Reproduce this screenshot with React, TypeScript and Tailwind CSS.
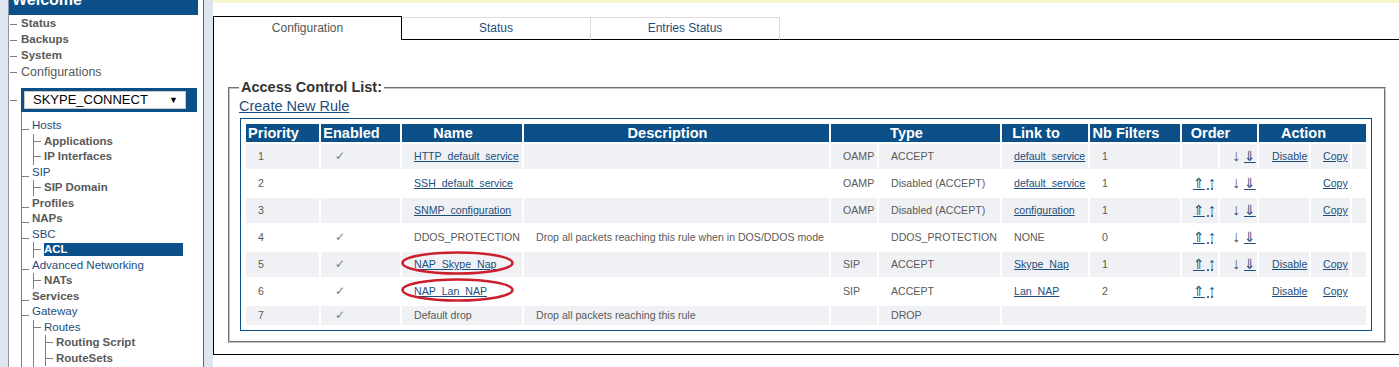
import React from 'react'

type Tone = 'bold' | 'link' | 'active'

const toneClass: Record<Tone, string> = {
  bold: 'font-bold text-[#595959]',
  link: 'text-[#1e4d7b]',
  active: 'inline-block w-[139px] h-[13px] leading-[13px] bg-[#0b5088] font-bold text-white',
}

function TreeItem({ label, tone, low }: { label: string; tone: Tone; low?: boolean }) {
  return (
    <div className="flex h-[15.5px] items-center whitespace-nowrap text-[11.5px]">
      <span className={`block h-px w-[7px] shrink-0 bg-[#808080] ${low ? 'translate-y-[4px]' : ''}`} />
      <span className={`ml-[3px] ${toneClass[tone]}`}>{label}</span>
    </div>
  )
}

function Group({ children }: { children: React.ReactNode }) {
  return <div className="ml-[11px] border-l border-[#808080]">{children}</div>
}

function Sidebar() {
  const top = ['Status', 'Backups', 'System']
  return (
    <div className="flex w-[196px] shrink-0 flex-col border-l border-r border-l-[#8a94a3] border-r-[#3f6a99] bg-white">
      <div className="-mt-[10px] h-[25px] w-[189px] shrink-0 bg-[#0b5088] pl-[3px] pt-[1px] text-[16px] font-bold leading-[18px] text-white">
        Welcome
      </div>
      <div className="mt-[1px]">
        {top.map((t) => (
          <div key={t} className="flex h-[16px] items-center text-[11.5px]">
            <span className="ml-[1px] block h-px w-[7px] bg-[#808080]" />
            <span className="ml-[4px] font-bold text-[#595959]">{t}</span>
          </div>
        ))}
        <div className="flex h-[16px] items-center text-[12.5px]">
          <span className="ml-[1px] block h-px w-[7px] bg-[#808080]" />
          <span className="ml-[4px] text-[#595959]">Configurations</span>
        </div>
      </div>

      <div className="mt-[8px] flex items-center">
        <span className="ml-[1px] block h-px w-[7px] bg-[#808080]" />
        <div className="ml-[4px] h-[24px] w-[176px] bg-[#0b5088] p-[3px]">
          <div className="flex h-[18px] w-[162px] items-center justify-between border border-[#c8c8c8] bg-white pl-[8px] pr-[7px] text-[13px] leading-[16px] text-black">
            <span>SKYPE_CONNECT</span>
            <span className="text-[9px]">▼</span>
          </div>
        </div>
      </div>

      <div className="ml-[12px] flex-1 border-l border-[#808080] pt-[6px]">
        <TreeItem label="Hosts" tone="link" low />
        <Group>
          <TreeItem label="Applications" tone="bold" />
          <TreeItem label="IP Interfaces" tone="bold" />
        </Group>
        <TreeItem label="SIP" tone="link" low />
        <Group>
          <TreeItem label="SIP Domain" tone="bold" />
        </Group>
        <TreeItem label="Profiles" tone="bold" low />
        <TreeItem label="NAPs" tone="bold" low />
        <TreeItem label="SBC" tone="link" low />
        <Group>
          <TreeItem label="ACL" tone="active" />
        </Group>
        <TreeItem label="Advanced Networking" tone="link" low />
        <Group>
          <TreeItem label="NATs" tone="bold" />
        </Group>
        <TreeItem label="Services" tone="bold" low />
        <TreeItem label="Gateway" tone="link" low />
        <Group>
          <TreeItem label="Routes" tone="link" />
          <Group>
            <TreeItem label="Routing Script" tone="bold" />
            <TreeItem label="RouteSets" tone="bold" />
          </Group>
          <div className="h-[20px]" />
        </Group>
      </div>
    </div>
  )
}

const A = ({ children }: { children: React.ReactNode }) => (
  <a href="#" className="text-[#1e4d7b] underline">
    {children}
  </a>
)

const UpArrows = () => (
  <span className="inline-flex items-center">
    <a href="#" className="font-['DejaVu_Sans'] text-[14px] leading-[14px] text-[#1e4d7b] underline">⇑</a>
    <a href="#" className="ml-[3px] text-[16px] leading-[14px] text-[#1e4d7b] underline decoration-dotted">↑</a>
  </span>
)

const DownArrows = () => (
  <span className="inline-flex items-center">
    <span className="text-[16px] leading-[14px] text-[#555]">↓</span>
    <a href="#" className="ml-[4px] font-['DejaVu_Sans'] text-[14px] leading-[14px] text-[#1e4d7b] underline">⇓</a>
  </span>
)

type Row = {
  prio: string
  on: boolean
  name: React.ReactNode
  circled?: boolean
  desc?: string
  proto: string
  type: string
  link?: React.ReactNode
  nb?: string
  up?: boolean
  down?: boolean
  disable?: boolean
  copy?: boolean
  last?: boolean
}

const rows: Row[] = [
  { prio: '1', on: true, name: <A>HTTP_default_service</A>, proto: 'OAMP', type: 'ACCEPT', link: <A>default_service</A>, nb: '1', down: true, disable: true, copy: true },
  { prio: '2', on: false, name: <A>SSH_default_service</A>, proto: 'OAMP', type: 'Disabled (ACCEPT)', link: <A>default_service</A>, nb: '1', up: true, down: true, copy: true },
  { prio: '3', on: false, name: <A>SNMP_configuration</A>, proto: 'OAMP', type: 'Disabled (ACCEPT)', link: <A>configuration</A>, nb: '1', up: true, down: true, copy: true },
  { prio: '4', on: true, name: 'DDOS_PROTECTION', desc: 'Drop all packets reaching this rule when in DOS/DDOS mode', proto: '', type: 'DDOS_PROTECTION', link: 'NONE', nb: '0', up: true, down: true },
  { prio: '5', on: true, name: <A>NAP_Skype_Nap</A>, circled: true, proto: 'SIP', type: 'ACCEPT', link: <A>Skype_Nap</A>, nb: '1', up: true, down: true, disable: true, copy: true },
  { prio: '6', on: true, name: <A>NAP_Lan_NAP</A>, circled: true, proto: 'SIP', type: 'ACCEPT', link: <A>Lan_NAP</A>, nb: '2', up: true, disable: true, copy: true },
  { prio: '7', on: true, name: 'Default drop', desc: 'Drop all packets reaching this rule', proto: '', type: 'DROP', last: true },
]

const headers: [string, number][] = [
  ['Priority', 1],
  ['Enabled', 1],
  ['Name', 1],
  ['Description', 1],
  ['Type', 2],
  ['Link to', 1],
  ['Nb Filters', 1],
  ['Order', 2],
  ['Action', 3],
]

function AclTable() {
  return (
    <div className="ml-[1px] w-fit border border-[#0b4f86] p-[3px]">
      <table className="w-[1124px] table-fixed border-separate border-spacing-[2px]">
        <colgroup>
          <col className="w-[73px]" />
          <col className="w-[79px]" />
          <col className="w-[120px]" />
          <col className="w-[305px]" />
          <col className="w-[46px]" />
          <col className="w-[121px]" />
          <col className="w-[86px]" />
          <col className="w-[90px]" />
          <col className="w-[36px]" />
          <col className="w-[37px]" />
          <col className="w-[50px]" />
          <col className="w-[39px]" />
          <col className="w-[14px]" />
        </colgroup>
        <thead>
          <tr>
            {headers.map(([h, span]) => (
              <th
                key={h}
                colSpan={span}
                className="h-[18px] whitespace-nowrap bg-[#0b5088] p-0 pr-[18px] text-center text-[14.5px] font-bold leading-[18px] text-white"
              >
                {h}
              </th>
            ))}
          </tr>
        </thead>
        <tbody>
          {rows.map((r, i) => {
            const bg = i % 2 === 0 ? 'bg-[#eff1f5]' : 'bg-white'
            const td = `${bg} ${r.last ? 'h-[19px]' : 'h-[25px]'} whitespace-nowrap p-0 pl-3 text-[10.6px] leading-[13px] text-[#5a5a5a]`
            return (
              <tr key={r.prio}>
                <td className={td}>{r.prio}</td>
                <td className={td}>
                  {r.on ? <span className="pl-[2px] font-['DejaVu_Sans'] text-[12px] text-[#7a7a7a]">✓</span> : null}
                </td>
                <td className={`${td} relative`}>
                  {r.name}
                  {r.circled ? (
                    <svg className="pointer-events-none absolute -left-[1px] -top-[1px]" width="113" height="24" viewBox="0 0 113 24">
                      <ellipse cx="56.5" cy="12" rx="55" ry="10.5" fill="none" stroke="#cc1f2d" strokeWidth="2.5" />
                    </svg>
                  ) : null}
                </td>
                <td className={td}>{r.desc ?? ''}</td>
                <td className={td}>{r.proto}</td>
                <td className={td}>{r.type}</td>
                {r.last ? (
                  <td className={td} colSpan={7} />
                ) : (
                  <>
                    <td className={td}>{r.link}</td>
                    <td className={td}>{r.nb}</td>
                    <td className={`${td} pl-[11px]`}>{r.up ? <UpArrows /> : null}</td>
                    <td className={td}>{r.down ? <DownArrows /> : null}</td>
                    <td className={`${td} pl-[13px]`}>{r.disable ? <A>Disable</A> : null}</td>
                    <td className={td}>{r.copy ? <A>Copy</A> : null}</td>
                    <td className={td} />
                  </>
                )}
              </tr>
            )
          })}
        </tbody>
      </table>
    </div>
  )
}

function Tabs() {
  return (
    <div className="flex h-[24px] items-end text-[12px]">
      <div className="flex h-[24px] w-[188px] items-center justify-center border-r border-t border-black pb-[2px] text-[#555]">
        Configuration
      </div>
      <div className="flex h-[23px] w-[189px] items-center justify-center border-b border-r border-t border-b-black border-r-[#dcdcdc] border-t-[#dcdcdc] pb-[1px] text-[#1e4d7b]">
        Status
      </div>
      <div className="flex h-[23px] w-[189px] items-center justify-center border-b border-r border-t border-b-black border-r-[#dcdcdc] border-t-[#dcdcdc] pb-[1px] text-[#1e4d7b]">
        Entries Status
      </div>
      <div className="h-[23px] flex-1 border-b border-black" />
    </div>
  )
}

export default function App() {
  return (
    <div className="flex h-[367px] w-[1399px] overflow-hidden bg-white font-['Liberation_Sans',Arial,sans-serif]">
      <div className="w-[8px] shrink-0 bg-[#dfe5ee]" />
      <Sidebar />
      <div className="w-[9px] shrink-0 bg-[#dfe5ee]" />
      <main className="flex min-w-0 flex-1 flex-col">
        <div className="h-[3px] bg-[#f6f6cc]" />
        <div className="mt-[13px] border-b border-l border-black pb-[11px]">
          <Tabs />
          <div className="pl-[14px] pr-[13px] pt-[39px]">
            <fieldset className="m-0 border-2 border-[#c4c4c4] pb-[10px] pl-[9px] pr-[10px] pt-0 [border-style:groove]">
              <legend className="px-[2px] text-[14.5px] font-bold leading-[17px] text-[#333]">Access Control List:</legend>
              <div className="h-[22px] pt-[2px] text-[14.5px] leading-[17px]">
                <a href="#" className="text-[#1e4d7b] underline">Create New Rule</a>
              </div>
              <AclTable />
            </fieldset>
          </div>
        </div>
      </main>
    </div>
  )
}
